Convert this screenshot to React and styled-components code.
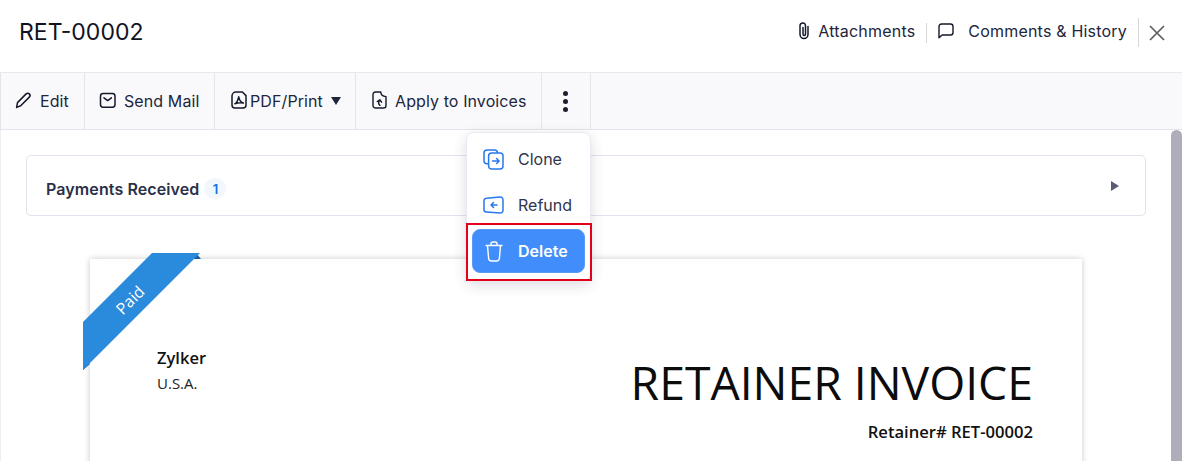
import React from "react";
import styled, { createGlobalStyle } from "styled-components";

const GlobalStyle = createGlobalStyle`
  html, body {
    margin: 0;
    height: 100%;
    overflow: hidden;
    background: #fff;
  }
  body {
    font-family: Inter, "Liberation Sans", sans-serif;
    color: #21263c;
  }
`;

const Page = styled.div`
  width: 1182px;
  height: 461px;
  display: flex;
  flex-direction: column;
  overflow: hidden;
`;

const Header = styled.header`
  height: 72px;
  flex: none;
  display: flex;
  align-items: center;
  justify-content: space-between;
  padding: 0 16px 0 19px;
  border-bottom: 1px solid #e8e8ec;
`;

const Title = styled.h1`
  margin: -9px 0 0;
  font-size: 23px;
  font-weight: 400;
  color: #11131f;
`;

const HeaderActions = styled.div`
  display: flex;
  align-items: center;
  margin-top: -9px;
`;

const HeaderLink = styled.a`
  display: flex;
  align-items: center;
  gap: ${(p) => p.$gap}px;
  font-size: 16px;
  letter-spacing: 0.2px;
  color: #21263c;
  padding: 0 11px 2px 0;
  height: 22px;
  svg {
    flex: none;
  }
`;

const Divider = styled.span`
  width: 1px;
  height: ${(p) => p.$h}px;
  background: #d6d6d6;
  margin: 2px ${(p) => p.$right}px 0 0;
`;

const CloseButton = styled.button`
  display: flex;
  border: 0;
  padding: 0;
  margin-top: 3px;
  background: none;
`;

const Toolbar = styled.nav`
  height: 56px;
  flex: none;
  display: flex;
  background: #f9f9fb;
  border-bottom: 1px solid #e4e4ea;
  border-left: 1px solid #e4e4ea;
`;

const ToolButton = styled.button`
  width: ${(p) => p.$w}px;
  box-sizing: border-box;
  display: flex;
  align-items: center;
  gap: ${(p) => p.$gap || 7}px;
  padding: 0 0 0 ${(p) => p.$pad || 14}px;
  border: 0;
  border-right: 1px solid #e4e4ea;
  background: none;
  font: 400 16px Inter, "Liberation Sans", sans-serif;
  letter-spacing: 0.1px;
  color: #21263c;
  svg {
    flex: none;
    margin-top: -2px;
  }
`;

const Caret = styled.span`
  width: 0;
  height: 0;
  margin-left: 5px;
  border-left: 5px solid transparent;
  border-right: 5px solid transparent;
  border-top: 8px solid #21263c;
`;

const Dots = styled.span`
  display: flex;
  flex-direction: column;
  gap: 3px;
  margin-left: 6px;
  i {
    width: 5px;
    height: 5px;
    border-radius: 50%;
    background: #1c1f2e;
  }
`;

const Body = styled.div`
  position: relative;
  flex: 1;
  display: flex;
  min-height: 0;
`;

const Content = styled.main`
  flex: 1;
  padding: 25px 25px 0 26px;
  overflow: hidden;
  border-left: 1px solid #eeeef2;
`;

const Scrollbar = styled.div`
  width: 11px;
  flex: none;
  background: #b0adbb;
  border-radius: 6px 6px 0 0;
`;

const PaymentsCard = styled.section`
  height: 61px;
  box-sizing: border-box;
  margin-left: -1px;
  display: flex;
  align-items: center;
  padding: 6px 26px 0 19px;
  border: 1px solid #e2e2ec;
  border-radius: 5px;
  background: #fff;
`;

const CardTitle = styled.span`
  font-size: 16px;
  font-weight: 600;
  letter-spacing: 0.1px;
  color: #2b3049;
`;

const CountBadge = styled.span`
  width: 22px;
  height: 21px;
  margin-left: 5px;
  display: flex;
  align-items: center;
  justify-content: center;
  border-radius: 50%;
  background: #f2f7fe;
  color: #1471e0;
  font-size: 13px;
  font-weight: 600;
`;

const Arrow = styled.span`
  margin-left: auto;
  width: 0;
  height: 0;
  margin-top: -5px;
  border-top: 5px solid transparent;
  border-bottom: 5px solid transparent;
  border-left: 8px solid #5a5c76;
`;

const Sheet = styled.article`
  position: relative;
  width: 992px;
  box-sizing: border-box;
  height: 260px;
  margin: 43px 0 0 63px;
  padding: 88px 49px 0 67px;
  background: #fff;
  box-shadow: 0 0 6px rgba(0, 0, 0, 0.22);
  font-family: "Open Sans", "Noto Sans", sans-serif;
  display: flex;
  justify-content: space-between;
  color: #111;
`;

const Ribbon = styled.div`
  position: absolute;
  left: -7px;
  top: -6px;
  width: 118px;
  height: 117px;
`;

const RibbonLabel = styled.span`
  position: absolute;
  left: 27px;
  top: 37px;
  width: 40px;
  text-align: center;
  transform: rotate(-45deg);
  color: #fff;
  font: 500 16px "Open Sans", sans-serif;
  line-height: 20px;
`;

const Company = styled.div`
  font-size: 16.5px;
  font-weight: 600;
  line-height: 22px;
`;

const Country = styled.div`
  font-size: 15px;
  line-height: 20px;
  margin-top: 4px;
  color: #222;
`;

const Heading = styled.div`
  text-align: right;
  margin-top: 5px;
`;

const DocTitle = styled.div`
  font-size: 46.3px;
  line-height: 62px;
  color: #0c0c0c;
`;

const DocNumber = styled.div`
  margin-top: 8px;
  font-size: 16.6px;
  font-weight: 600;
  line-height: 20px;
`;

const Menu = styled.div`
  position: absolute;
  left: 466px;
  top: 2px;
  width: 125px;
  box-sizing: border-box;
  height: 149px;
  padding: 3px 5px;
  display: flex;
  flex-direction: column;
  background: #fff;
  border: 1px solid #e9e9f1;
  border-radius: 8px;
  box-shadow: 0 4px 14px rgba(40, 40, 80, 0.16);
`;

const MenuItem = styled.div`
  height: ${(p) => (p.$active ? 44 : 46)}px;
  flex: none;
  box-sizing: border-box;
  display: flex;
  align-items: center;
  gap: ${(p) => (p.$active ? 15 : 14)}px;
  padding-left: ${(p) => (p.$active ? 12 : 11)}px;
  border-radius: 8px;
  font-size: 16px;
  font-weight: ${(p) => (p.$active ? 600 : 400)};
  color: ${(p) => (p.$active ? "#fff" : "#30354d")};
  background: ${(p) => (p.$active ? "#408dfb" : "transparent")};
  ${(p) => p.$active && "border: 1px solid #5b9bf5; margin-top: 1px;"}
`;

const Highlight = styled.div`
  position: absolute;
  left: 466px;
  top: 93px;
  width: 126px;
  height: 58px;
  box-sizing: border-box;
  border: 2px solid #e3001b;
  pointer-events: none;
`;

const stroke = { fill: "none", stroke: "#15182a", strokeLinecap: "round", strokeLinejoin: "round" };

const PencilIcon = () => (
  <svg width="18" height="18" viewBox="0 0 18 18" {...stroke} strokeWidth="1.5">
    <path d="M1.600 16.400l.9-4.800 8.600-8.700c.9-.9 2.300-.9 3.200 0 .9.9.9 2.300 0 3.200l-8.600 8.700-4.100 1.600z" />
  </svg>
);

const MailIcon = () => (
  <svg width="17" height="17" viewBox="0 0 17 17" {...stroke} strokeWidth="1.500">
    <rect x="1.500" y="1.600" width="14.500" height="13.600" rx="2.600" />
    <path d="M5 5.800l3.700 2.800 3.700-2.800" />
  </svg>
);

const PdfIcon = () => (
  <svg width="16" height="18" viewBox="0 0 16 18" {...stroke} strokeWidth="1.500">
    <path d="M5 1h6.400L15 4.600v9.400c0 1.700-1.300 3-3 3H4c-1.700 0-3-1.300-3-3V5c0-2.200 1.800-4 4-4z" />
    <path d="M3.800 12.800c1.800-.9 3.200-3.800 3.900-7 .6 3 2.400 5.500 4.700 6.200-3-.7-5.900-.3-8.600.8z" />
  </svg>
);

const ApplyIcon = () => (
  <svg width="15" height="18" viewBox="0 0 15 18" {...stroke} strokeWidth="1.400">
    <path d="M3.500 1h5.300c0 2.500 1.800 4.300 5.200 4.600v8.800c0 1.400-1.100 2.600-2.600 2.600H3.600C2.200 17 1 15.800 1 14.400V3.500C1 2.100 2.100 1 3.500 1z" />
    <path d="M8 14.300c-1.500-1-1.800-2.800-.5-5M5.300 10.500l2.500-1.800 1.800 2.500" />
  </svg>
);

const ClipIcon = () => (
  <svg width="12" height="18" viewBox="0 0 12 18" {...stroke} strokeWidth="1.500">
    <path d="M6 5.500V12c0 1 .5 1.500 1.300 1.500S8.500 13 8.500 12V3.800C8.500 2.200 7.400 1 5.900 1 4.200 1 3 2.200 3 3.800v8.400c0 2.300 1.700 4.300 4 4.300s4-2 4-4.300V4.500" />
  </svg>
);

const CommentIcon = () => (
  <svg width="16" height="16" viewBox="0 0 16 16" {...stroke} strokeWidth="1.400">
    <path d="M1 14.800V3.500C1 2.100 2.100 1 3.500 1h9C13.900 1 15 2.100 15 3.500v6c0 1.400-1.100 2.500-2.500 2.500H4.200L1 14.800z" />
  </svg>
);

const CloseIcon = () => (
  <svg width="18" height="18" viewBox="0 0 18 18" fill="none" stroke="#5f5f63" strokeWidth="1.700">
    <path d="M2 2l14 14M16 2L2 16" />
  </svg>
);

const CloneIcon = () => (
  <svg width="21" height="21" viewBox="0 0 21 21" fill="none" stroke="#2878ec" strokeWidth="1.500" strokeLinecap="round" strokeLinejoin="round">
    <path d="M5.500 14.800H4C2.300 14.800 1 13.500 1 11.800V4C1 2.300 2.300 1 4 1h7.500c1.500 0 2.800 1.100 3 2.600" />
    <rect x="5.600" y="4" width="14.400" height="16" rx="3" />
    <path d="M9.500 12h6.500M13.600 9.500l2.500 2.500-2.500 2.500" />
  </svg>
);

const RefundIcon = () => (
  <svg width="21" height="18" viewBox="0 0 21 18" fill="none" stroke="#2878ec" strokeWidth="1.500" strokeLinecap="round" strokeLinejoin="round">
    <path d="M3.500 2.300L17 1c1.700-.1 3 1.200 3 2.800v10.400c0 1.600-1.300 2.900-3 2.800L3.500 16C2.100 15.900 1 14.800 1 13.400V4.800c0-1.400 1.100-2.400 2.500-2.500z" />
    <path d="M14 9H8M10.500 6.500L8 9l2.500 2.500" />
  </svg>
);

const TrashIcon = () => (
  <svg width="18" height="21" viewBox="0 0 18 21" fill="none" stroke="#fff" strokeWidth="1.400" strokeLinecap="round" strokeLinejoin="round">
    <path d="M1 4.500h16M6 4.200V2.800C6 1.800 6.800 1 7.800 1h2.400c1 0 1.800.8 1.800 1.800v1.400" />
    <path d="M2.500 4.800l1.100 12.400c.1 1.500 1.200 2.800 2.800 2.800h5.200c1.600 0 2.700-1.300 2.800-2.800l1.100-12.400" />
  </svg>
);

const RibbonShape = () => (
  <svg width="118" height="117" viewBox="0 0 118 117">
    <path d="M118 6l-5-6-3 6zM0 117l7-6-7-6z" fill="#175f9f" />
    <path d="M69 0h48L0 117V69z" fill="#2a8adb" />
  </svg>
);

export default function App() {
  return (
    <Page>
      <GlobalStyle />
      <Header>
        <Title>RET-00002</Title>
        <HeaderActions>
          <HeaderLink $gap={9}>
            <ClipIcon />
            Attachments
          </HeaderLink>
          <Divider $h={20} $right={11} />
          <HeaderLink $gap={14}>
            <CommentIcon />
            Comments &amp; History
          </HeaderLink>
          <Divider $h={29} $right={9} />
          <CloseButton aria-label="Close">
            <CloseIcon />
          </CloseButton>
        </HeaderActions>
      </Header>
      <Toolbar>
        <ToolButton $w={84}>
          <PencilIcon />
          Edit
        </ToolButton>
        <ToolButton $w={130} $gap={8}>
          <MailIcon />
          Send Mail
        </ToolButton>
        <ToolButton $w={141} $gap={3} $pad={16}>
          <PdfIcon />
          PDF/Print
          <Caret />
        </ToolButton>
        <ToolButton $w={186} $gap={8} $pad={16}>
          <ApplyIcon />
          Apply to Invoices
        </ToolButton>
        <ToolButton $w={49} $pad={15}>
          <Dots>
            <i />
            <i />
            <i />
          </Dots>
        </ToolButton>
      </Toolbar>
      <Body>
        <Content>
          <PaymentsCard>
            <CardTitle>Payments Received</CardTitle>
            <CountBadge>1</CountBadge>
            <Arrow />
          </PaymentsCard>
          <Sheet>
            <Ribbon>
              <RibbonShape />
              <RibbonLabel>Paid</RibbonLabel>
            </Ribbon>
            <div>
              <Company>Zylker</Company>
              <Country>U.S.A.</Country>
            </div>
            <Heading>
              <DocTitle>RETAINER INVOICE</DocTitle>
              <DocNumber>Retainer# RET-00002</DocNumber>
            </Heading>
          </Sheet>
        </Content>
        <Scrollbar />
        <Menu>
          <MenuItem>
            <CloneIcon />
            Clone
          </MenuItem>
          <MenuItem>
            <RefundIcon />
            Refund
          </MenuItem>
          <MenuItem $active>
            <TrashIcon />
            Delete
          </MenuItem>
        </Menu>
        <Highlight />
      </Body>
    </Page>
  );
}
